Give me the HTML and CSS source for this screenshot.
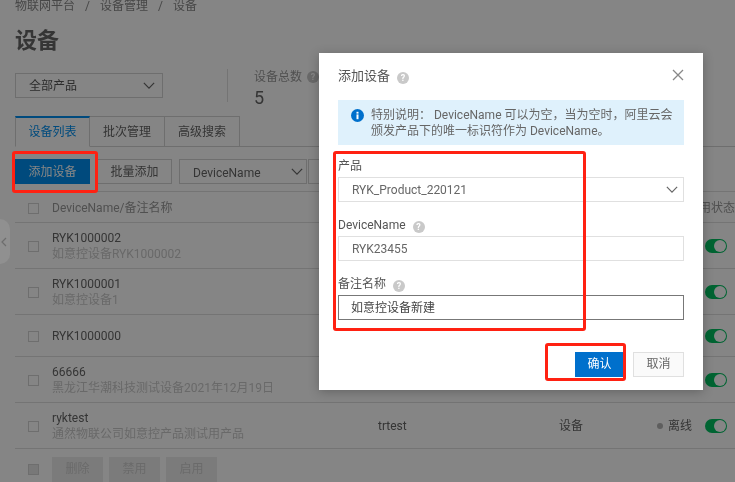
FILE: index.html
```html
<!DOCTYPE html>
<html lang="zh">
<head>
<meta charset="utf-8">
<title>设备</title>
<link rel="stylesheet" href="styles.css">
</head>
<body>
<svg class="defs" width="0" height="0" aria-hidden="true">
  <symbol id="chev" viewBox="0 0 14 8"><path d="M1 1l6 6 6-6" fill="none" stroke="currentColor" stroke-width="1.4"/></symbol>
</svg>
<div class="page">
  <nav class="crumb"><span>物联网平台</span><i>/</i><span>设备管理</span><i>/</i><span>设备</span></nav>
  <h1 class="title">设备</h1>
  <div class="summary">
    <div class="select product"><span>全部产品</span><svg class="chev"><use href="#chev"/></svg></div>
    <div class="stat">
      <div class="stat-label">设备总数 <b class="help">?</b></div>
      <div class="stat-value">5</div>
    </div>
  </div>
  <div class="tabs">
    <div class="tab active">设备列表</div>
    <div class="tab">批次管理</div>
    <div class="tab">高级搜索</div>
  </div>
  <div class="toolbar">
    <div class="btn primary">添加设备</div>
    <div class="btn">批量添加</div>
    <div class="select field"><span>DeviceName</span><svg class="chev"><use href="#chev"/></svg></div>
    <div class="select search"></div>
  </div>
  <div class="table">
    <div class="row head">
      <span class="check"></span><span class="cell-name">DeviceName/备注名称</span><span></span><span></span><span class="head-state">启用状态</span>
    </div>
    <div class="row">
      <span class="check"></span>
      <div class="cell-name"><div>RYK1000002</div><div class="sub">如意控设备RYK1000002</div></div>
      <span></span><span></span><span></span><span class="toggle"></span>
    </div>
    <div class="row">
      <span class="check"></span>
      <div class="cell-name"><div>RYK1000001</div><div class="sub">如意控设备1</div></div>
      <span></span><span></span><span></span><span class="toggle"></span>
    </div>
    <div class="row single">
      <span class="check"></span>
      <div class="cell-name"><div>RYK1000000</div></div>
      <span></span><span></span><span></span><span class="toggle"></span>
    </div>
    <div class="row">
      <span class="check"></span>
      <div class="cell-name"><div>66666</div><div class="sub">黑龙江华潮科技测试设备2021年12月19日</div></div>
      <span></span><span></span><span></span><span class="toggle"></span>
    </div>
    <div class="row">
      <span class="check"></span>
      <div class="cell-name"><div>ryktest</div><div class="sub">通然物联公司如意控产品测试用产品</div></div>
      <span>trtest</span><span>设备</span><span class="state"><i class="dot"></i>离线</span><span class="toggle"></span>
    </div>
    <div class="bulk">
      <span class="check filled"></span>
      <div class="btn off">删除</div>
      <div class="btn off">禁用</div>
      <div class="btn off">启用</div>
    </div>
  </div>
</div>

<div class="overlay"></div>
<div class="handle"><svg width="6" height="10" viewBox="0 0 6 10"><path d="M5 1L1 5l4 4" fill="none" stroke="currentColor" stroke-width="1.2"/></svg></div>

<section class="modal">
  <button class="close" aria-label="关闭"><svg width="12" height="12" viewBox="0 0 12 12"><path d="M1 1l10 10M11 1L1 11" fill="none" stroke="currentColor" stroke-width="1.3"/></svg></button>
  <h2 class="modal-title">添加设备<b class="help">?</b></h2>
  <div class="notice">
    <svg class="notice-icon" width="13" height="13" viewBox="0 0 13 13"><circle cx="6.5" cy="6.5" r="6.5" fill="#0070cc"/><rect x="5.5" y="5.4" width="2" height="4.8" fill="#fff"/><rect x="5.5" y="2.8" width="2" height="1.8" fill="#fff"/></svg>
    <p>特别说明： DeviceName 可以为空，当为空时，阿里云会颁发产品下的唯一标识符作为 DeviceName。</p>
  </div>
  <div class="form-item">
    <label>产品</label>
    <div class="control"><span>RYK_Product_220121</span><svg class="chev"><use href="#chev"/></svg></div>
  </div>
  <div class="form-item">
    <label>DeviceName<b class="help">?</b></label>
    <div class="control"><span>RYK23455</span></div>
  </div>
  <div class="form-item">
    <label>备注名称<b class="help">?</b></label>
    <div class="control focus"><span>如意控设备新建</span></div>
  </div>
  <div class="actions">
    <div class="mbtn ok">确认</div>
    <div class="mbtn">取消</div>
  </div>
</section>

<div class="mark mark-add"></div>
<div class="mark mark-form"></div>
<div class="mark mark-ok"></div>
</body>
</html>
```

FILE: styles.css
```css
* { box-sizing: border-box; }
html, body { margin: 0; height: 100%; overflow: hidden; }
body {
  position: relative;
  width: 735px;
  height: 482px;
  background: #fff;
  color: #666;
  font: 12px/16px Roboto, "Noto Sans CJK SC", sans-serif;
}
.defs { position: absolute; }
.page { height: 482px; overflow: hidden; padding-left: 15px; filter: blur(.3px); }

.crumb { display: flex; gap: 9px; color: #888; height: 12px; line-height: 12px; }
.crumb i { font-style: normal; margin: 0 1px; }
.title { margin: 17px 0 0; height: 24px; font-size: 22px; line-height: 24px; font-weight: 700; color: #666; }

.summary { display: flex; margin-top: 20px; height: 25px; }
.select {
  display: flex; align-items: center; justify-content: space-between;
  height: 25px; border: 1px solid #d4d4d4; background: #fff; padding: 0 0 0 13px;
}
.chev { width: 12px; height: 7px; color: #666; flex: none; }
.product { width: 148px; color: #555; }
.product .chev { margin-right: 7px; }
.stat {
  margin: -4px 0 0 64px; width: 200px; height: 33px; padding-left: 26px;
  border-left: 1px solid #dedede; color: #999;
}
.stat-label { height: 16px; display: flex; align-items: center; gap: 5px; }
.stat-value { margin-top: 4px; font-size: 18px; line-height: 18px; color: #666; }

.help {
  display: inline-block; width: 12px; height: 12px; border-radius: 50%;
  background: #c9c9c9; color: #fff; font-size: 9px; line-height: 12px;
  text-align: center; font-weight: 700; margin-left: 7px; vertical-align: -1px; flex: none;
}
.stat-label .help { margin-left: 0; }

.tabs { display: flex; margin-top: 18px; height: 31px; border-bottom: 1px solid #d4d4d4; }
.tab {
  width: 75px; height: 31px; line-height: 30px; text-align: center;
  border: 1px solid #d4d4d4; border-left: 0; color: #666; background: #fff;
}
.tab.active {
  border-left: 1px solid #d4d4d4; border-top: 2px solid #008ff0;
  border-bottom-color: #fff; color: #008ff0; line-height: 28px;
}

.toolbar { display: flex; margin-top: 12px; height: 25px; }
.btn {
  height: 25px; width: 75px; line-height: 25px; text-align: center;
  border: 1px solid #d4d4d4; margin-right: 7px; color: #666; background: #fff;
}
.btn.primary { background: #008ff0; border-color: #008ff0; color: #fff; }
.field { width: 128px; color: #666; margin-right: 1px; }
.field span { padding-top: 2px; }
.field .chev { margin-right: 3px; }
.search { width: 30px; }

.table { margin-top: 7px; }
.row {
  display: grid;
  grid-template-columns: 37px 326px 181px 98px 48px 30px;
  align-items: center;
  padding: 7px 0 6px;
  border-bottom: 1px solid #dfdfdf;
  color: #666;
}
.row.single { padding: 13px 0 12px; }
.row.head { padding: 8px 0 6px; border-top: 1px solid #dfdfdf; color: #999; }
.check { width: 11px; height: 11px; border: 1px solid #d4d4d4; margin-left: 13px; background: #fff; }
.check.filled { background: #e6e6e6; }
.sub { color: #c9c9c9; }
.head-state { grid-column: 5 / span 2; margin-left: 30px; width: 60px; white-space: nowrap; }
.state { display: flex; align-items: center; gap: 5px; }
.dot { width: 6px; height: 6px; border-radius: 50%; background: #b5b5b5; flex: none; }
.toggle {
  position: relative; display: block; width: 22px; height: 14px; border-radius: 7px;
  background: #00c060; margin-top: -1px;
}
.toggle::after {
  content: ""; position: absolute; right: 1px; top: 1px; width: 12px; height: 12px;
  border-radius: 50%; background: #fff;
}
.bulk { display: flex; align-items: center; padding-top: 8px; }
.bulk .check { margin-right: 13px; }
.btn.off {
  width: 51px; height: 25px; margin-right: 6px; border: 0; line-height: 25px;
  background: #ebebeb; color: #ccc;
}

.overlay { position: absolute; inset: 0; background: rgba(0, 0, 0, .48); }

.handle {
  position: absolute; left: 0; top: 219px; width: 10px; height: 45px;
  border-radius: 0 10px 10px 0; background: #909090; color: #6d6d6d;
  display: flex; align-items: center; padding-left: 1px;
}

.modal {
  position: absolute; left: 319px; top: 53px; width: 384px; height: 337px;
  padding: 0 19px; background: #fff; color: #333;
  box-shadow: 0 2px 10px rgba(0, 0, 0, .25);
  filter: blur(.25px);
}
.close {
  position: absolute; right: 19px; top: 16px; padding: 0; border: 0; background: none;
  color: #888; width: 12px; height: 12px; display: block;
}
.close svg { display: block; }
.modal-title {
  margin: 0; padding-top: 15px; height: 47px; font-size: 13px; line-height: 16px;
  font-weight: 400; color: #555;
}
.notice {
  display: flex; gap: 7px; height: 45px; padding: 7px 6px 0 13px; background: #dff1fc; color: #666;
}
.notice-icon { flex: none; margin-top: 2px; }
.notice p { margin: 0; line-height: 16px; }
.form-item { margin-top: 12px; }
.form-item label { display: block; height: 20px; padding-top: 1px; line-height: 16px; color: #555; }
.form-item + .form-item { margin-top: 14px; }
.control {
  display: flex; align-items: center; justify-content: space-between;
  height: 25px; padding: 0 5px 0 13px; border: 1px solid #e0e0e0; color: #666;
}
.control.focus { border-color: #777; color: #444; padding-left: 12px; }
.actions { display: flex; justify-content: flex-end; gap: 9px; margin-top: 32px; }
.mbtn {
  width: 51px; height: 25px; line-height: 23px; text-align: center;
  border: 1px solid #e0e0e0; background: #fafafa; color: #666;
}
.mbtn.ok { width: 49px; background: #0070cc; border-color: #0070cc; color: #fff; }

.mark { position: absolute; border: 3px solid #ff2112; border-radius: 3px; }
.mark-add { left: 12px; top: 151px; width: 86px; height: 42px; }
.mark-form { left: 333px; top: 151px; width: 253px; height: 180px; }
.mark-ok { left: 545px; top: 343px; width: 81px; height: 38px; }
```
